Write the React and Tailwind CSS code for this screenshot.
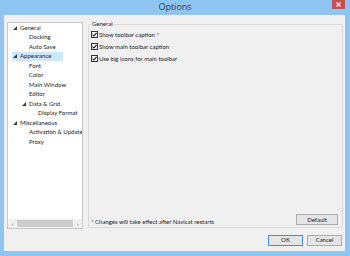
import React from 'react';

const font = { fontFamily: 'Lato, "Open Sans", sans-serif' };

const treeItems = [
  { label: 'General', level: 0, expander: true },
  { label: 'Docking', level: 1 },
  { label: 'Auto Save', level: 1 },
  { label: 'Appearance', level: 0, expander: true, selected: true },
  { label: 'Font', level: 1 },
  { label: 'Color', level: 1 },
  { label: 'Main Window', level: 1 },
  { label: 'Editor', level: 1 },
  { label: 'Data & Grid', level: 1, expander: true },
  { label: 'Display Format', level: 2 },
  { label: 'Miscellaneous', level: 0, expander: true },
  { label: 'Activation & Updates', level: 1 },
  { label: 'Proxy', level: 1 },
];

const Expander = () => (
  <svg width="4" height="4" viewBox="0 0 4 4" className="shrink-0">
    <polygon points="4,0 4,4 0,4" fill="#3a3a3a" />
  </svg>
);

const TreeRow = ({ item }) => {
  const pad = ['pl-[4px]', 'pl-[13px]', 'pl-[22px]'][item.level];
  return (
    <div className={`flex items-center h-[9.5px] ${pad}`}>
      <div className={`flex items-center h-full pr-[2px] ${item.selected ? 'bg-[#cce8ff] w-[51px]' : ''}`}>
        <div className="w-[8px] flex justify-start pl-[1px]">{item.expander && <Expander />}</div>
        <span className="whitespace-nowrap text-[6px] leading-none text-[#1a1a1a]">{item.label}</span>
      </div>
    </div>
  );
};

const Check = ({ label }) => (
  <div className="flex items-center gap-[1px] h-[11px]">
    <div className="w-[7px] h-[7px] border border-[#333] bg-white flex items-center justify-center">
      <svg width="5" height="5" viewBox="0 0 5 5">
        <path d="M0.6 2.6 L2 4 L4.5 0.8" stroke="#111" strokeWidth="1.1" fill="none" />
      </svg>
    </div>
    <span className="text-[6px] leading-none text-[#1a1a1a] whitespace-nowrap">{label}</span>
  </div>
);

const Button = ({ children, primary, w }) => (
  <div
    className={`${w} h-[11px] flex items-center justify-center text-[6px] leading-none text-[#1a1a1a] bg-[#e5e5e5] border ${
      primary ? 'border-[#3c8fe0]' : 'border-[#adadad]'
    }`}
  >
    {children}
  </div>
);

export default function App() {
  return (
    <div className="w-[350px] h-[256px] bg-[#8ec5f2] flex flex-col overflow-hidden" style={font}>
      <div className="h-[15px] relative flex items-center justify-center">
        <span className="text-[9px] leading-none text-[#333b45] -mt-[2px]" style={{ fontFamily: '"Open Sans", sans-serif' }}>
          Options
        </span>
        <div className="absolute right-[5px] top-0 w-[13px] h-[9px] bg-[#c7504f] flex items-center justify-center">
          <svg width="5" height="5" viewBox="0 0 5 5">
            <path d="M0.5 0.5 L4.5 4.5 M4.5 0.5 L0.5 4.5" stroke="#fff" strokeWidth="1.1" />
          </svg>
        </div>
      </div>
      <div className="flex-1 ml-[4px] mr-[5px] mb-[5px] bg-[#f0f0f0] flex flex-col pt-[7px] pl-[3px] pr-[2px]">
        <div className="flex gap-[5px] h-[207px]">
          <div className="w-[76px] h-full bg-white border border-[#c8c8c8] flex flex-col overflow-hidden">
            <div className="flex-1 overflow-hidden">
              {treeItems.map((it) => (
                <TreeRow key={it.label} item={it} />
              ))}
            </div>
            <div className="h-[9px] flex items-stretch bg-[#f0f0f0]">
              <div className="w-[9px] flex items-center justify-center text-[6px] leading-none text-[#555]">‹</div>
              <div className="w-[56px] my-[1px] bg-[#cdcdcd]" />
              <div className="flex-1" />
              <div className="w-[9px] flex items-center justify-center text-[6px] leading-none text-[#555]">›</div>
            </div>
          </div>
          <fieldset className="flex-1 h-full border border-[#dadada] rounded-[1px] px-[2px] pb-[2px] flex flex-col min-w-0 -mt-[1px]">
            <legend className="text-[6px] leading-none text-[#1a1a1a] px-[1px]">General</legend>
            <div className="flex flex-col pt-[2px] gap-[1px]">
              <Check label="Show toolbar caption *" />
              <Check label="Show main toolbar caption" />
              <Check label="Use big icons for main toolbar" />
            </div>
            <div className="flex-1" />
            <div className="flex items-end justify-between pb-[1px]">
              <span className="text-[6px] leading-none text-[#1a1a1a] whitespace-nowrap -mb-[1px]">
                * Changes will take effect after Navicat restarts
              </span>
              <div className="mr-[2px] -mb-[1px]">
                <Button w="w-[42px]">Default</Button>
              </div>
            </div>
          </fieldset>
        </div>
        <div className="flex-1 flex items-center justify-end gap-[4px] pr-[1px]">
          <Button primary w="w-[35px]">OK</Button>
          <Button w="w-[35px]">Cancel</Button>
        </div>
      </div>
    </div>
  );
}
